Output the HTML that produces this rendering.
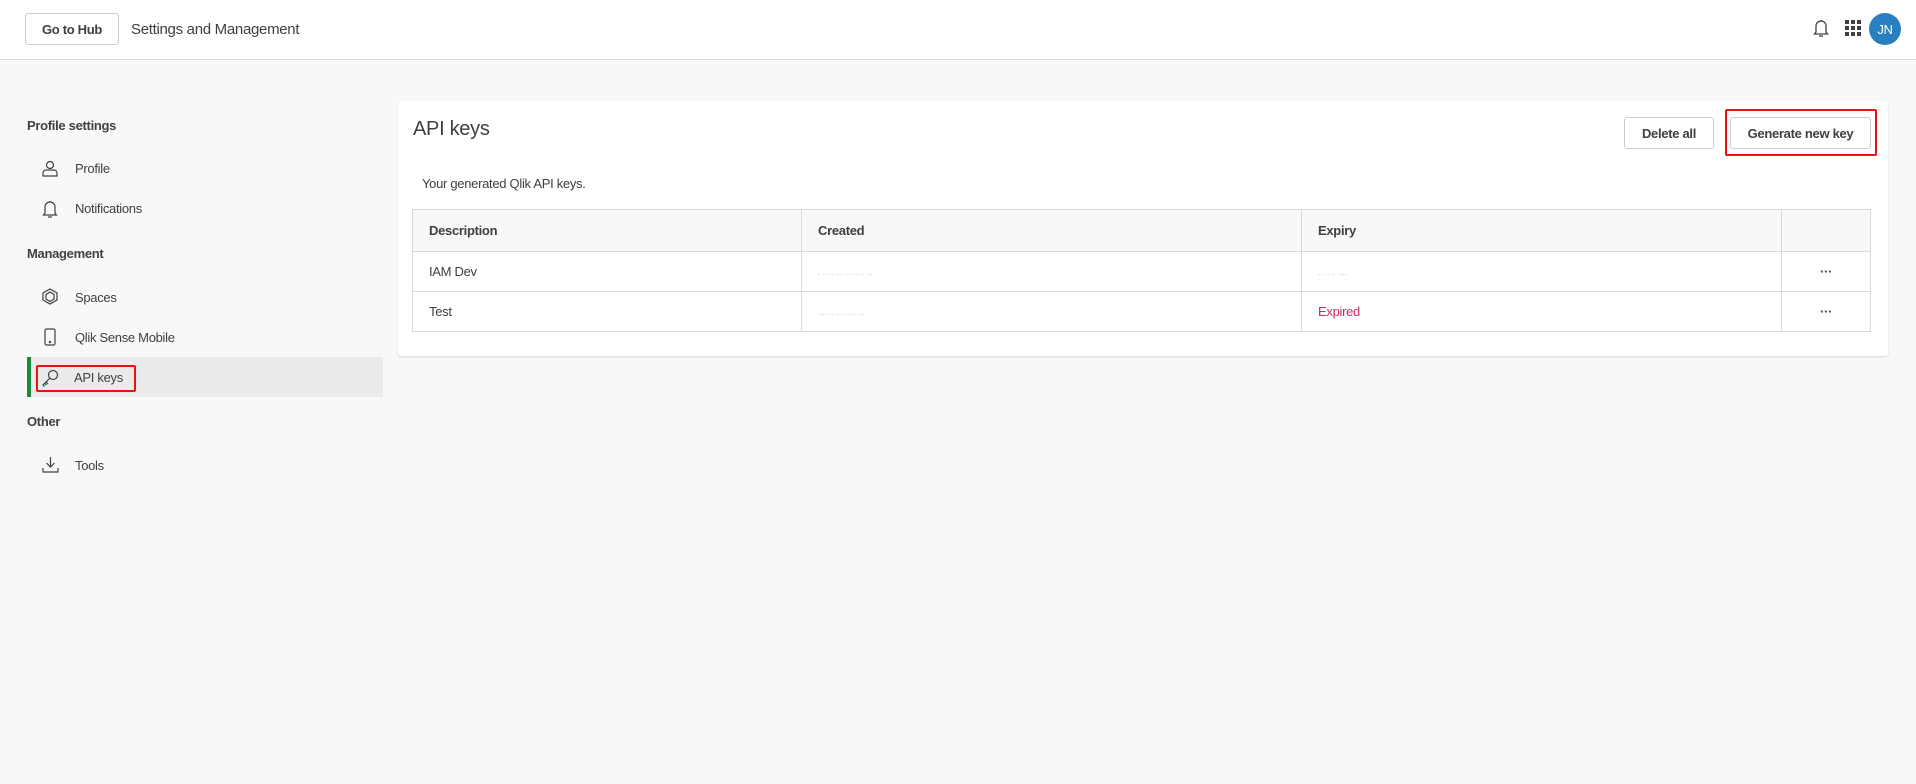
<!DOCTYPE html>
<html><head><style>
*{box-sizing:border-box;margin:0;padding:0}
body{width:1916px;height:784px;background:#f8f8f8;font-family:"Liberation Sans",sans-serif;color:#404040;position:relative;overflow:hidden;letter-spacing:-0.3px}
.a{position:absolute}
.hdr{left:0;top:0;width:1916px;height:60px;background:#fff;border-bottom:1px solid #d9d9d9}
.btn{border:1px solid #ccc;border-radius:3px;background:#fff;font-weight:bold;font-size:13px;display:flex;align-items:center;justify-content:center;color:#404040}
.sec{font-weight:bold;font-size:13px;left:27px}
.it{left:75px;font-size:13px}
.ic{left:42px}
table{border-collapse:collapse;font-size:13px}
td,th{border:1px solid #d9d9d9;text-align:left;padding:0 16px}
th{height:42px;background:#f8f8f8;font-weight:bold}
td{height:40px;background:#fff}
</style></head><body>
<div class="a hdr"></div>
<div class="a btn" style="left:25px;top:13px;width:94px;height:32px">Go to Hub</div>
<div class="a" style="left:131px;top:21px;font-size:15px;color:#404040">Settings and Management</div>
<svg class="a" style="left:1812px;top:18px" width="18" height="20" viewBox="0 0 18 20" fill="none" stroke="#404040" stroke-width="1.3"><path d="M4 14V8a5 5 0 0110 0v6l1.5 2h-13z"/><path d="M7 18h4"/><path d="M9 2v1"/></svg>
<svg class="a" style="left:1845px;top:20px" width="16" height="16"><g fill="#404040"><rect x="0" y="0" width="4" height="4"/><rect x="6" y="0" width="4" height="4"/><rect x="12" y="0" width="4" height="4"/><rect x="0" y="6" width="4" height="4"/><rect x="6" y="6" width="4" height="4"/><rect x="12" y="6" width="4" height="4"/><rect x="0" y="12" width="4" height="4"/><rect x="6" y="12" width="4" height="4"/><rect x="12" y="12" width="4" height="4"/></g></svg>
<div class="a" style="left:1869px;top:13px;width:32px;height:32px;border-radius:50%;background:#2a7fc0;color:#fff;font-size:13px;display:flex;align-items:center;justify-content:center">JN</div>

<div class="a sec" style="top:118px">Profile settings</div>
<svg class="a ic" style="top:160px" width="16" height="17" fill="none" stroke="#404040" stroke-width="1.2"><circle cx="8" cy="5" r="3.5"/><path d="M1 16v-3a3 3 0 013-3h8a3 3 0 013 3v3z"/></svg>
<div class="a it" style="top:161px">Profile</div>
<svg class="a ic" style="top:200px" width="16" height="18" fill="none" stroke="#404040" stroke-width="1.2"><path d="M3 13V7a5 5 0 0110 0v6l1.5 2h-13z"/><path d="M6 17h4"/><path d="M8 1v1"/></svg>
<div class="a it" style="top:201px">Notifications</div>
<div class="a sec" style="top:246px">Management</div>
<svg class="a ic" style="top:288px" width="16" height="17" fill="none" stroke="#404040" stroke-width="1.2"><path d="M8 1l7 4v7l-7 4-7-4V5z"/><path d="M8 4l4 2.5v4.5L8 13.5 4 11V6.5z"/></svg>
<div class="a it" style="top:290px">Spaces</div>
<svg class="a ic" style="top:328px;left:44px" width="12" height="18" fill="none" stroke="#404040" stroke-width="1.2"><rect x="1" y="1" width="10" height="16" rx="1.5"/><circle cx="6" cy="14" r=".6" fill="#404040"/></svg>
<div class="a it" style="top:330px">Qlik Sense Mobile</div>
<div class="a" style="left:27px;top:357px;width:356px;height:40px;background:#ebebeb;border-left:4px solid #1a8a3e"></div>
<div class="a" style="left:36px;top:365px;width:100px;height:27px;border:2px solid #ee1111;border-radius:2px"></div>
<svg class="a" style="left:41px;top:369px" width="18" height="18" fill="none" stroke="#404040" stroke-width="1.2"><circle cx="12" cy="6" r="4.5"/><path d="M9 9L2 16l1.5 1.5M5 13l2 2M4 14.5l1.5 1.5"/></svg>
<div class="a it" style="top:370px;left:74px">API keys</div>
<div class="a sec" style="top:414px">Other</div>
<svg class="a ic" style="top:456px" width="17" height="17" fill="none" stroke="#404040" stroke-width="1.2"><path d="M8.5 1v10M4.5 7l4 4 4-4M1 12v4h15v-4"/></svg>
<div class="a it" style="top:458px">Tools</div>

<div class="a" style="left:398px;top:101px;width:1490px;height:255px;background:#fff;border-radius:3px;box-shadow:0 1px 2px rgba(0,0,0,.12)"></div>
<div class="a" style="left:413px;top:118px;font-size:20px;color:#404040">API keys</div>
<div class="a btn" style="left:1624px;top:117px;width:90px;height:32px">Delete all</div>
<div class="a" style="left:1725px;top:109px;width:152px;height:47px;border:2px solid #ee1111;border-radius:2px"></div>
<div class="a btn" style="left:1730px;top:117px;width:141px;height:32px">Generate new key</div>
<div class="a" style="left:422px;top:176px;font-size:13px">Your generated Qlik API keys.</div>
<table class="a" style="left:412px;top:209px;width:1459px">
<tr><th style="width:389px">Description</th><th style="width:500px">Created</th><th style="width:480px">Expiry</th><th></th></tr>
<tr><td>IAM Dev</td><td style="color:#ccc;font-size:9px">. .. .. ... .. ... .. ...</td><td style="color:#ccc;font-size:9px">. . . .. ....</td><td style="text-align:center;font-weight:bold">···</td></tr>
<tr><td>Test</td><td style="color:#ccc;font-size:9px">.... .. .... .... ...</td><td style="color:#d0285c">Expired</td><td style="text-align:center;font-weight:bold">···</td></tr>
</table>
</body></html>
